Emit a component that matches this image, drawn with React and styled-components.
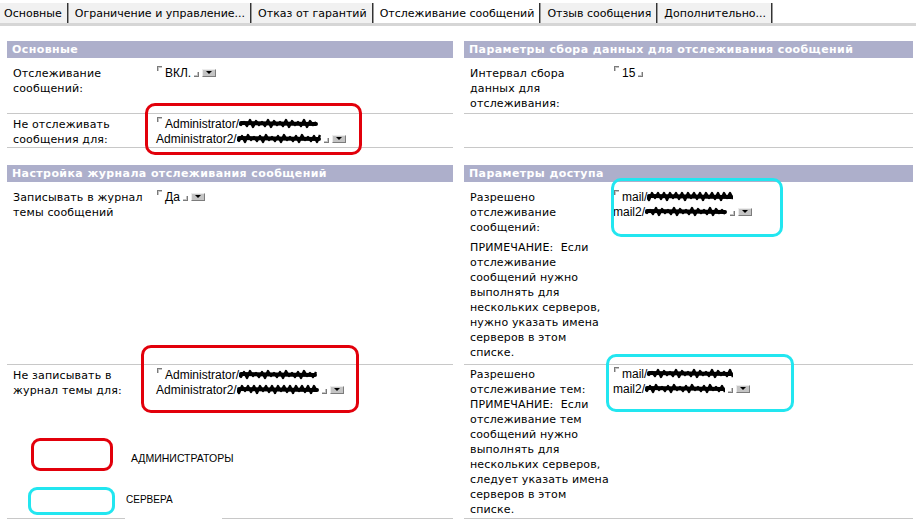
import React from "react";
import styled, { createGlobalStyle } from "styled-components";

const GlobalStyle = createGlobalStyle`
  body {
    margin: 0;
    background: #fff;
    font-family: "DejaVu Sans", Verdana, sans-serif;
    color: #000;
  }
`;

const Page = styled.div`
  width: 916px;
  height: 526px;
  overflow: hidden;
`;

const TabBar = styled.div`
  display: flex;
  height: 20px;
  margin-top: 3px;
  border-bottom: 3px solid #d6d6d6;
  font-size: 11px;
`;

const Tab = styled.div`
  display: flex;
  align-items: center;
  padding: 0 5px 0 ${(p) => (p.$first ? 4 : 6)}px;
  margin-right: 1px;
  background: ${(p) => (p.$active ? "#fff" : "#f1f1f1")};
  border-right: 1px solid #333;
  box-shadow: 1px 0 0 #9a9a9a;
  white-space: nowrap;
`;

const Section = styled.div`
  display: grid;
  grid-template-columns: 446px 449px;
  column-gap: 11px;
  padding-left: 7px;
  margin-top: ${(p) => p.$top}px;
`;

const Header = styled.div`
  height: 17px;
  line-height: 17px;
  padding-left: 5px;
  background: #adafcb;
  color: #fff;
  font-size: 11px;
  font-weight: bold;
  letter-spacing: 0.4px;
  white-space: nowrap;
`;

const Row = styled.div`
  display: grid;
  grid-template-columns: 143px 1fr;
  align-content: start;
  box-sizing: border-box;
  min-height: ${(p) => p.$h}px;
  padding: ${(p) => p.$pt}px 0 0 6px;
  border-bottom: 1px solid #c8c8c8;
  ${(p) =>
    p.$split &&
    `border-image: linear-gradient(to right, #c8c8c8 118px, transparent 118px, transparent 215px, #c8c8c8 215px) 1;`}
  font-size: 11px;
  line-height: 15px;
  letter-spacing: 0.15px;
`;

const Label = styled.div`
  padding-right: 3px;
`;

const Note = styled.div`
  margin-top: 5px;
`;

const Value = styled.div`
  position: relative;
  font-family: "Liberation Sans", Arial, sans-serif;
  font-size: 12px;
  line-height: 15px;
  letter-spacing: 0;
  white-space: nowrap;
`;

const CornerOpen = styled.span`
  display: inline-block;
  width: 4px;
  height: 4px;
  margin: 0 3px 0 1px;
  border-left: 1px solid #7a7a7a;
  border-top: 1px solid #7a7a7a;
  box-shadow: inset 1px 1px 0 #c4c4c4;
  vertical-align: 6px;
`;

const CornerClose = styled.span`
  display: inline-block;
  width: 4px;
  height: 4px;
  margin-left: 3px;
  border-right: 1px solid #7a7a7a;
  border-bottom: 1px solid #7a7a7a;
  box-shadow: inset -1px -1px 0 #c4c4c4;
  vertical-align: 0;
`;

const Drop = styled.span`
  position: relative;
  display: inline-block;
  width: 12px;
  height: 6px;
  margin-left: 3px;
  background: #c4c4c4;
  border-top: 1px solid #ececec;
  border-left: 1px solid #ececec;
  border-bottom: 1px solid #7c7c7c;
  border-right: 1px solid #7c7c7c;
  vertical-align: 0;

  &::after {
    content: "";
    position: absolute;
    left: 3px;
    top: 1px;
    border-left: 3px solid transparent;
    border-right: 3px solid transparent;
    border-top: 3px solid #000;
  }
`;

const Mark = styled.div`
  position: absolute;
  top: ${(p) => p.$top}px;
  left: ${(p) => p.$left}px;
  width: ${(p) => p.$w}px;
  height: ${(p) => p.$hgt}px;
  box-sizing: border-box;
  border: 3px solid ${(p) => p.$color};
  border-radius: 10px;
  pointer-events: none;
`;

const Legend = styled.div`
  grid-column: 1 / -1;
  display: flex;
  flex-direction: column;
  gap: 16px;
  margin-top: 40px;
`;

const LegendItem = styled.div`
  display: flex;
  align-items: center;
  margin-left: ${(p) => p.$ml}px;
`;

const LegendBox = styled.div`
  box-sizing: border-box;
  width: ${(p) => p.$w}px;
  height: ${(p) => p.$hgt}px;
  border: 3px solid ${(p) => p.$color};
  border-radius: 9px;
`;

const LegendText = styled.span`
  margin-left: ${(p) => p.$gap}px;
  margin-top: ${(p) => p.$dy}px;
  font-family: "Liberation Sans", Arial, sans-serif;
  font-size: ${(p) => p.$size}px;
  letter-spacing: 0;
`;

const RED = "#e2000b";
const CYAN = "#22e6f0";

function Scribble({ w, seed = 1 }) {
  let d = "M0 6";
  for (let x = 2, i = 0; x <= w; x += 3, i++) {
    const y = i % 2 ? 2 + ((i * seed) % 3) : 9 - ((i + seed) % 3);
    d += ` L${x} ${y}`;
  }
  return (
    <svg
      width={w}
      height="11"
      viewBox={`0 0 ${w} 11`}
      style={{ verticalAlign: "-1px" }}
    >
      <path d={d} fill="none" stroke="#000" strokeWidth="2.4" strokeLinejoin="round" />
      <path d={`M2 5 L${w - 2} 6`} stroke="#000" strokeWidth="4" strokeLinecap="round" />
    </svg>
  );
}

const NOTE_MESSAGES =
  "ПРИМЕЧАНИЕ:\u00a0 Если отслеживание сообщений нужно выполнять для нескольких серверов, нужно указать имена серверов в этом списке.";
const NOTE_TOPICS =
  "Разрешено отслеживание тем: ПРИМЕЧАНИЕ:\u00a0 Если отслеживание тем сообщений нужно выполнять для нескольких серверов, следует указать имена серверов в этом списке.";

export default function App() {
  return (
    <Page>
      <GlobalStyle />
      <TabBar>
        <Tab $first>Основные</Tab>
        <Tab>Ограничение и управление...</Tab>
        <Tab>Отказ от гарантий</Tab>
        <Tab $active>Отслеживание сообщений</Tab>
        <Tab>Отзыв сообщения</Tab>
        <Tab>Дополнительно...</Tab>
      </TabBar>

      <Section $top={15}>
        <Header>Основные</Header>
        <Header>Параметры сбора данных для отслеживания сообщений</Header>

        <Row $h={56} $pt={8}>
          <Label>Отслеживание сообщений:</Label>
          <Value>
            <CornerOpen />
            ВКЛ.
            <CornerClose />
            <Drop />
          </Value>
        </Row>
        <Row $h={56} $pt={8}>
          <Label>Интервал сбора данных для отслеживания:</Label>
          <Value>
            <CornerOpen />
            15
            <CornerClose />
          </Value>
        </Row>

        <Row $h={34} $pt={3}>
          <Label>Не отслеживать сообщения для:</Label>
          <Value>
            <Mark $color={RED} $top={-14} $left={-11} $w={217} $hgt={52} />
            <CornerOpen />
            Administrator/
            <Scribble w={79} seed={2} />
            <br />
            Administrator2/
            <Scribble w={84} seed={1} />
            <CornerClose />
            <Drop />
          </Value>
        </Row>
        <Row $h={34} $pt={3} />
      </Section>

      <Section $top={17}>
        <Header>Настройка журнала отслеживания сообщений</Header>
        <Header>Параметры доступа</Header>

        <Row $h={183} $pt={8}>
          <Label>Записывать в журнал темы сообщений</Label>
          <Value>
            <CornerOpen />
            Да
            <CornerClose />
            <Drop />
          </Value>
        </Row>
        <Row $h={183} $pt={8}>
          <Label>
            Разрешено отслеживание сообщений:
            <Note>{NOTE_MESSAGES}</Note>
          </Label>
          <Value>
            <Mark $color={CYAN} $top={-12} $left={-2} $w={172} $hgt={59} />
            <CornerOpen />
            mail/
            <Scribble w={86} seed={3} />
            <br />
            mail2/
            <Scribble w={82} seed={2} />
            <CornerClose />
            <Drop />
          </Value>
        </Row>

        <Row $h={154} $pt={3} $split>
          <Label>Не записывать в журнал темы для:</Label>
          <Value>
            <Mark $color={RED} $top={-23} $left={-15} $w={218} $hgt={68} />
            <CornerOpen />
            Administrator/
            <Scribble w={78} seed={1} />
            <br />
            Administrator2/
            <Scribble w={82} seed={3} />
            <CornerClose />
            <Drop />
          </Value>
          <Legend>
            <LegendItem $ml={18}>
              <LegendBox $color={RED} $w={82} $hgt={33} />
              <LegendText $gap={18} $dy={8} $size={10.5}>
                АДМИНИСТРАТОРЫ
              </LegendText>
            </LegendItem>
            <LegendItem $ml={15}>
              <LegendBox $color={CYAN} $w={87} $hgt={28} />
              <LegendText $gap={11} $dy={-4} $size={10}>
                СЕРВЕРА
              </LegendText>
            </LegendItem>
          </Legend>
        </Row>
        <Row $h={154} $pt={2}>
          <Label>{NOTE_TOPICS}</Label>
          <Value>
            <Mark $color={CYAN} $top={-13} $left={-7} $w={188} $hgt={58} />
            <CornerOpen />
            mail/
            <Scribble w={86} seed={2} />
            <br />
            mail2/
            <Scribble w={80} seed={1} />
            <CornerClose />
            <Drop />
          </Value>
        </Row>
      </Section>
    </Page>
  );
}
